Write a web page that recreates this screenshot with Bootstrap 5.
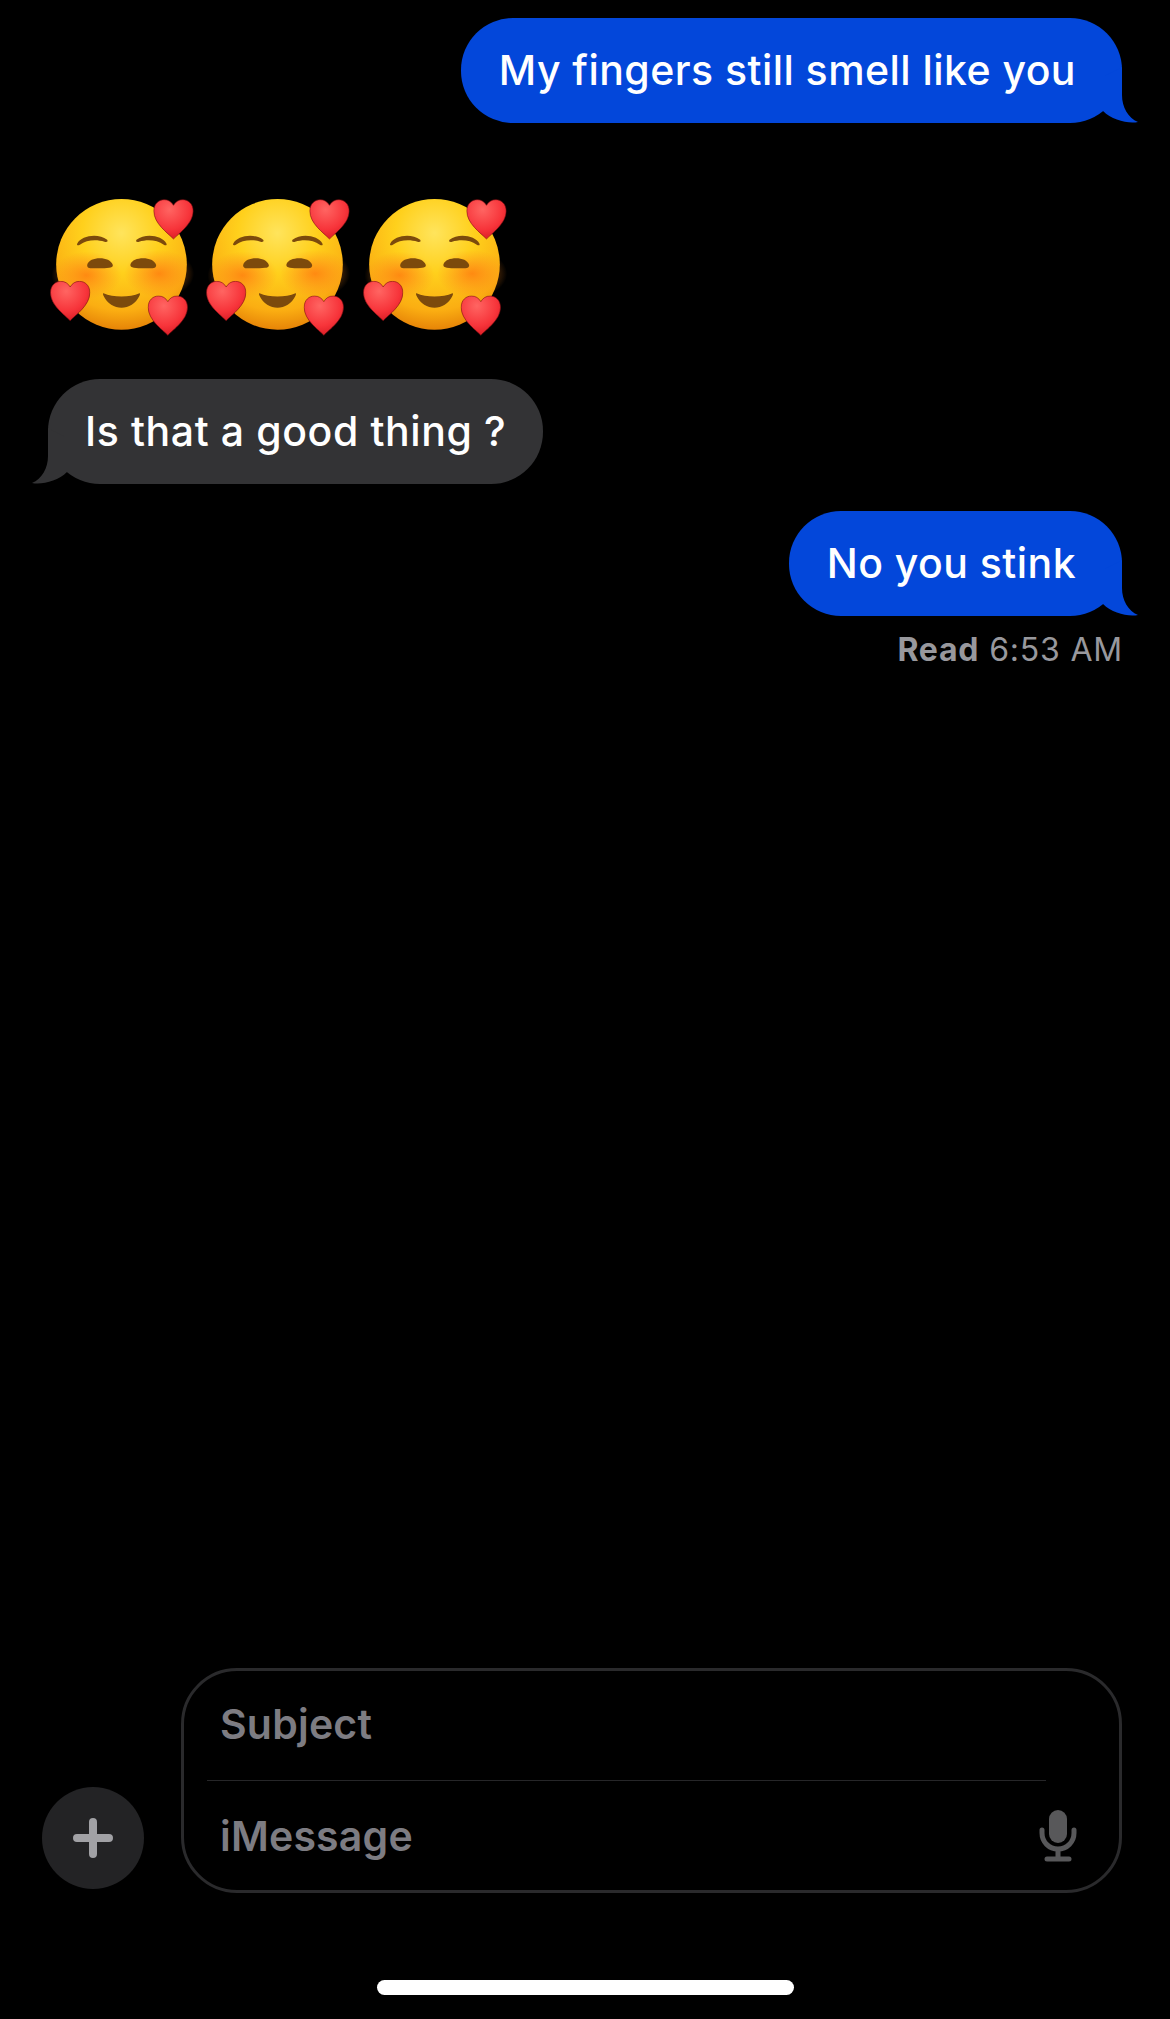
<!DOCTYPE html>
<html lang="en">
<head>
    <meta charset="UTF-8">
    <meta name="viewport" content="width=device-width, initial-scale=1.0">
    <title>Messages</title>
    <link href="https://cdn.jsdelivr.net/npm/bootstrap@5.3.0/dist/css/bootstrap.min.css" rel="stylesheet">
    <style>
        html, body { height: 100%; }
        body {
            background-color: #000;
            font-family: Inter, "Liberation Sans", sans-serif;
            overflow: hidden;
        }
        .phone-screen { height: 2019px; }
        .thread { padding: 18px 48px 0; }

        /* message bubbles */
        .msg-bubble {
            position: relative;
            height: 105px;
            border-radius: 52px;
            font-size: 41px;
            font-weight: 500;
            letter-spacing: 0.45px;
            color: #fff;
            white-space: nowrap;
        }
        .msg-out { background-color: #0347da; padding: 0 46px 0 38px; }
        .msg-in { background-color: #333335; padding: 0 37px; letter-spacing: 0.6px; }
        .msg-tail { position: absolute; bottom: 0; width: 45px; height: 56px; }
        .msg-out .msg-tail { right: -18px; fill: #0347da; }
        .msg-in .msg-tail { left: -18px; fill: #333335; transform: scaleX(-1); }
        .emoji-row { gap: 9.33px; margin-top: 74px; margin-bottom: 42px; }
        .emoji-art { width: 147px; height: 140px; }
        .second-out { margin-top: 27px; }
        .read-line {
            margin-top: 14px;
            margin-right: -1px;
            font-size: 32px;
            line-height: 40px;
            letter-spacing: 0.8px;
            color: #98989d;
        }

        /* composer */
        .composer { padding: 0 48px 0 42px; gap: 37px; }
        .plus-btn {
            width: 102px;
            height: 102px;
            margin-bottom: 4px;
            background-color: #232325;
        }
        .compose-box {
            height: 225px;
            border: 3px solid #2a2a2c;
            border-radius: 56px;
        }
        .compose-row {
            height: 109px;
            padding: 0 42px 0 36px;
            font-size: 41px;
            font-weight: 600;
            letter-spacing: 0.2px;
            color: #7d7c82;
        }
        .subject-row { padding-bottom: 2px; }
        .imessage-text { position: relative; top: 1px; }
        .compose-rule { height: 1px; margin: 0 73px 0 23px; background-color: #262628; }
        .home-wrap { padding: 87px 0 24px; }
        .home-bar { width: 417px; height: 15px; border-radius: 8px; background-color: #fff; }
    </style>
</head>
<body>
    <!-- shared drawings -->
    <svg width="0" height="0" class="d-block">
        <defs>
            <radialGradient id="faceFill" cx="50%" cy="26%" r="76%">
                <stop offset="0" stop-color="#ffe45c"/>
                <stop offset="0.4" stop-color="#ffd01c"/>
                <stop offset="0.78" stop-color="#fbae12"/>
                <stop offset="1" stop-color="#e47f06"/>
            </radialGradient>
            <radialGradient id="blushFill">
                <stop offset="0" stop-color="#ff8010" stop-opacity="0.85"/>
                <stop offset="1" stop-color="#ff8a1e" stop-opacity="0"/>
            </radialGradient>
            <radialGradient id="heartFill" cx="40%" cy="25%" r="85%">
                <stop offset="0" stop-color="#ff6562"/>
                <stop offset="0.6" stop-color="#f7343a"/>
                <stop offset="1" stop-color="#d2161f"/>
            </radialGradient>
            <symbol id="heart" viewBox="-2 -2 122 122">
                <path d="M59 118C42 100 0 72 0 34C0 12 15 0 31 0C43 0 53 6 59 17C65 6 75 0 87 0C103 0 118 12 118 34C118 72 76 100 59 118Z" fill="url(#heartFill)" stroke="#7d0d12" stroke-opacity="0.6" stroke-width="3"/>
            </symbol>
            <symbol id="smile-hearts" viewBox="55 50 440 420">
                <circle cx="275" cy="252" r="196" fill="url(#faceFill)"/>
                <ellipse cx="170" cy="285" rx="105" ry="72" fill="url(#blushFill)"/>
                <ellipse cx="388" cy="280" rx="105" ry="72" fill="url(#blushFill)"/>
                <g fill="#7c4a0c">
                    <path d="M142 190C155 165 205 158 232 178C236 184 230 186 224 184C200 176 170 178 150 193C145 196 140 195 142 190Z"/>
                    <path d="M410 190C397 165 347 158 320 178C316 184 322 186 328 184C352 176 382 178 402 193C407 196 412 195 410 190Z"/>
                    <path d="M172 254C176 240 192 234 210 234C228 234 244 240 249 254C250 260 244 262 238 262C220 264 200 264 182 264C176 264 171 260 172 254Z"/>
                    <path d="M302 252C306 240 322 234 340 234C358 234 374 240 379 254C380 260 374 264 368 264C350 264 330 264 312 262C306 262 300 258 302 252Z"/>
                    <path d="M221 339C250 352 300 352 329 339C331 338 331 342 329 346C318 370 296 382 275 382C254 382 232 370 221 346C219 342 219 338 221 339Z"/>
                </g>
                <use href="#heart" x="370" y="56" width="122" height="122"/>
                <use href="#heart" x="60" y="301" width="122" height="122"/>
                <use href="#heart" x="353" y="345" width="122" height="122"/>
            </symbol>
            <symbol id="tail" viewBox="0 0 45 56">
                <path d="M27 0V28C27 40 33 51 43 55C33 57 17 53 8 44L8 10Z"/>
            </symbol>
        </defs>
    </svg>

    <div class="phone-screen d-flex flex-column">
        <div class="thread flex-grow-1 d-flex flex-column">
            <div class="msg-bubble msg-out align-self-end d-flex align-items-center">
                My fingers still smell like you
                <svg class="msg-tail"><use href="#tail"/></svg>
            </div>

            <div class="emoji-row d-flex">
                <svg class="emoji-art"><use href="#smile-hearts"/></svg>
                <svg class="emoji-art"><use href="#smile-hearts"/></svg>
                <svg class="emoji-art"><use href="#smile-hearts"/></svg>
            </div>

            <div class="msg-bubble msg-in align-self-start d-flex align-items-center">
                Is that a good thing ?
                <svg class="msg-tail"><use href="#tail"/></svg>
            </div>

            <div class="msg-bubble msg-out second-out align-self-end d-flex align-items-center">
                No you stink
                <svg class="msg-tail"><use href="#tail"/></svg>
            </div>
            <div class="read-line align-self-end"><strong>Read</strong> 6:53 AM</div>
        </div>

        <div class="composer d-flex align-items-end">
            <div class="plus-btn rounded-circle flex-shrink-0 d-flex align-items-center justify-content-center">
                <svg width="40" height="40" viewBox="0 0 40 40"><path d="M20 4V36M4 20H36" stroke="#a1a1a5" stroke-width="8" stroke-linecap="round"/></svg>
            </div>
            <div class="compose-box flex-grow-1">
                <div class="compose-row subject-row d-flex align-items-center">Subject</div>
                <div class="compose-rule"></div>
                <div class="compose-row d-flex align-items-center justify-content-between">
                    <span class="imessage-text">iMessage</span>
                    <svg width="38" height="52" viewBox="0 0 38 52" fill="none">
                        <rect x="10" y="0" width="18" height="33" rx="9" fill="#58585a"/>
                        <path d="M3 20V23C3 32 10 39 19 39C28 39 35 32 35 23V20" stroke="#58585a" stroke-width="5" stroke-linecap="round"/>
                        <path d="M19 39V48" stroke="#58585a" stroke-width="5"/>
                        <path d="M8 49H30" stroke="#58585a" stroke-width="5" stroke-linecap="round"/>
                    </svg>
                </div>
            </div>
        </div>

        <div class="home-wrap d-flex justify-content-center">
            <div class="home-bar"></div>
        </div>
    </div>

    <script src="https://cdn.jsdelivr.net/npm/bootstrap@5.3.0/dist/js/bootstrap.bundle.min.js"></script>
</body>
</html>
